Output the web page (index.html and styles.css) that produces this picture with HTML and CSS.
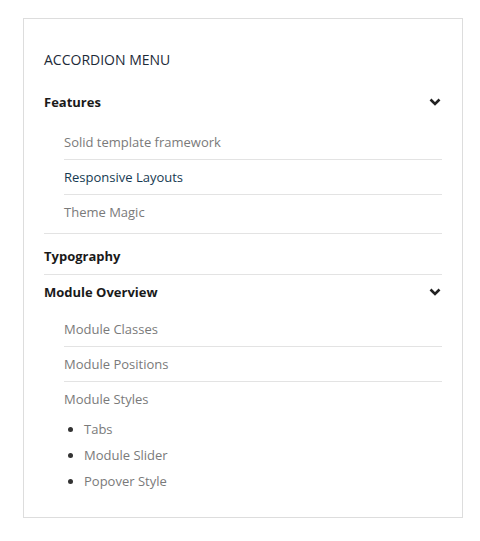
FILE: index.html
```html
<!DOCTYPE html>
<html lang="en">
<head>
    <meta charset="UTF-8">
    <meta name="viewport" content="width=device-width, initial-scale=1.0">
    <title>Accordion Menu</title>
    <link rel="stylesheet" href="styles.css">
</head>
<body>

    <div class="module">
        <h3 class="module-title">Accordion Menu</h3>
        <ul class="accordion">
            <li class="parent open">
                <a href="#" class="toggle">
                    Features
                    <svg class="chevron" width="12" height="8" viewBox="0 0 12 8"><polyline points="1.5,1.5 6,6 10.5,1.5" /></svg>
                </a>
                <ul class="submenu">
                    <li><a href="#">Solid template framework</a></li>
                    <li class="active"><a href="#">Responsive Layouts</a></li>
                    <li><a href="#">Theme Magic</a></li>
                </ul>
            </li>
            <li class="leaf">
                <a href="#" class="toggle">Typography</a>
            </li>
            <li class="parent open">
                <a href="#" class="toggle">
                    Module Overview
                    <svg class="chevron" width="12" height="8" viewBox="0 0 12 8"><polyline points="1.5,1.5 6,6 10.5,1.5" /></svg>
                </a>
                <ul class="submenu">
                    <li><a href="#">Module Classes</a></li>
                    <li><a href="#">Module Positions</a></li>
                    <li>
                        <a href="#">Module Styles</a>
                        <ul class="bullets">
                            <li><a href="#">Tabs</a></li>
                            <li><a href="#">Module Slider</a></li>
                            <li><a href="#">Popover Style</a></li>
                        </ul>
                    </li>
                </ul>
            </li>
        </ul>
    </div>

</body>
</html>
```

FILE: styles.css
```css
* {
    box-sizing: border-box;
    margin: 0;
    padding: 0;
}

body {
    background: #fff;
    font-family: 'Open Sans', 'DejaVu Sans', sans-serif;
    font-size: 13px;
    line-height: 20px;
    padding: 18px 0 0 23px;
}

a {
    text-decoration: none;
}

ul {
    list-style: none;
}

.module {
    width: 440px;
    border: 1px solid #dddddd;
    padding: 31px 20px 19px;
}

.module-title {
    font-size: 14px;
    font-weight: 400;
    line-height: 20px;
    text-transform: uppercase;
    color: #1d2a38;
    margin-bottom: 15px;
}

.accordion > li {
    border-bottom: 1px solid #e3e3e3;
}

.accordion > li:last-child {
    border-bottom: none;
}

.toggle {
    display: flex;
    justify-content: space-between;
    align-items: center;
    padding: 7px 0 8px;
    font-weight: 700;
    color: #1a1a1a;
}

.accordion > li:first-child > .toggle {
    padding-bottom: 11px;
}

.leaf > .toggle {
    padding: 12px 0 8px;
}

.chevron {
    fill: none;
    stroke: #222;
    stroke-width: 2.6;
    margin-right: 1px;
}

.submenu {
    padding: 2px 0 4px 20px;
}

.submenu > li {
    border-bottom: 1px solid #e3e3e3;
}

.submenu > li:last-child {
    border-bottom: none;
}

.submenu a {
    display: block;
    padding: 7px 0;
    color: #7a7a7a;
}

.submenu .active > a {
    color: #163a52;
}

.bullets {
    padding-left: 4px;
}

.bullets li {
    display: flex;
    align-items: center;
    gap: 11px;
}

.bullets li::before {
    content: "";
    width: 5px;
    height: 5px;
    border-radius: 50%;
    background: #333;
}

.bullets a {
    padding: 3px 0;
}
```
